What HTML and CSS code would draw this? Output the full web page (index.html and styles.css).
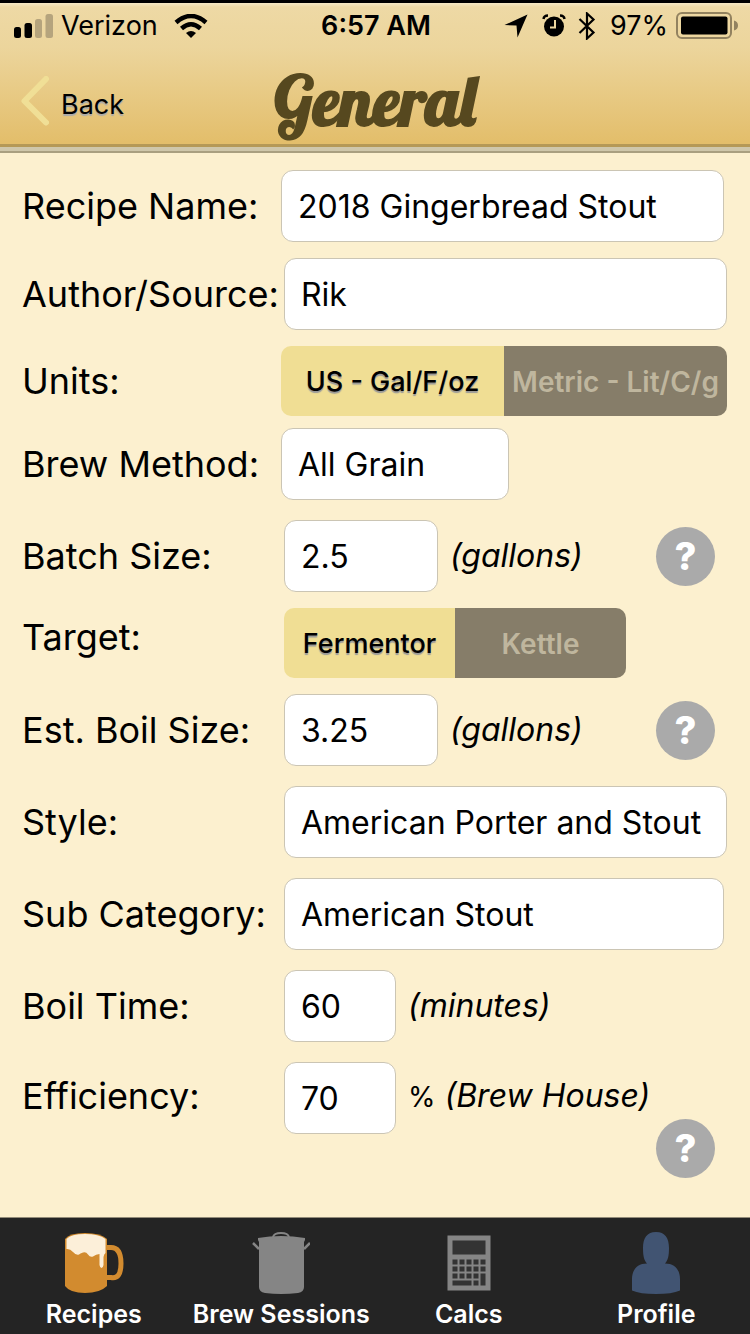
FILE: index.html
```html
<!DOCTYPE html>
<html lang="en">
<head>
<meta charset="utf-8">
<meta name="viewport" content="width=device-width">
<title>General</title>
<link rel="stylesheet" href="styles.css">
</head>
<body>
<header class="header">
  <div class="status">
    <div class="status-left">
      <svg width="39" height="24" viewBox="0 0 39 24"><rect y="13" width="7" height="11" rx="2.5"/><rect x="10.500" y="9" width="7.500" height="15" rx="2.500"/><g fill="#b5a47d"><rect x="21" y="5" width="7" height="19" rx="2.500"/><rect x="31.500" width="7.500" height="24" rx="2.500"/></g></svg>
      <span>Verizon</span>
      <svg class="wifi" width="34" height="24" viewBox="0 0 34 24"><path d="M17 24l-5-5q5-4 10 0z"/><g fill="none" stroke="#000" stroke-width="4.500"><path d="M2 8.500Q17-4.500 32 8.500"/><path d="M7.500 14.500Q17 6 26.500 14.500"/></g></svg>
    </div>
    <time class="status-time">6:57 AM</time>
    <div class="status-right">
      <svg width="24" height="24" viewBox="0 0 24 24"><path d="M23.500 .5L13.500 23.500 12.500 11.500.5 11z"/></svg>
      <svg class="alarm" width="24" height="24" viewBox="0 0 24 24"><circle cx="12" cy="12.500" r="10"/><path d="M1.500 5Q2 1.500 6 1.500M22.500 5Q22 1.500 18 1.500" fill="none" stroke="#000" stroke-width="2.500"/><path d="M13 6v7.500H8" fill="none" stroke="#ecd69f" stroke-width="2"/></svg>
      <svg class="bluetooth" width="18" height="28" viewBox="0 0 18 28"><path d="M1.500 7L15.500 20.500 9 26.500V1.500L15.500 7.500 1.500 21" fill="none" stroke="#000" stroke-width="2.200"/></svg>
      <span>97%</span>
      <svg class="battery" width="62" height="27" viewBox="0 0 62 27"><rect x="1" y="1" width="54" height="25" rx="5" fill="none" stroke="#92825f" stroke-width="2"/><rect x="5" y="4.500" width="46.500" height="18" rx="2"/><path d="M58 8.500q4 1 4 5t-4 5z" fill="#92825f"/></svg>
    </div>
  </div>
  <nav class="nav">
    <button class="back" type="button">
      <svg width="28" height="50" viewBox="0 0 28 50"><path d="M25 3L3.500 25 25 46.500" fill="none" stroke="#f0df96" stroke-width="6" stroke-linecap="round" stroke-linejoin="round"/></svg>
      <span>Back</span>
    </button>
    <h1 class="title">General</h1>
  </nav>
</header>

<main class="form">
  <div class="row row-inset row-near gap-m">
    <label for="name">Recipe Name:</label>
    <input class="field" id="name" value="2018 Gingerbread Stout">
  </div>
  <div class="row gap-m">
    <label for="author">Author/Source:</label>
    <input class="field" id="author" value="Rik">
  </div>
  <div class="row row-near gap-s">
    <span class="label" id="units">Units:</span>
    <div class="segments" role="group" aria-labelledby="units">
      <button class="segment active" type="button" aria-pressed="true">US - Gal/F/oz</button>
      <button class="segment" type="button" aria-pressed="false">Metric - Lit/C/g</button>
    </div>
  </div>
  <div class="row row-near gap-l">
    <label for="method">Brew Method:</label>
    <input class="field field-m" id="method" value="All Grain">
  </div>
  <div class="row gap-m">
    <label for="batch">Batch Size:</label>
    <div class="measure">
      <input class="field field-s" id="batch" value="2.5">
      <span class="unit">(gallons)</span>
      <button class="help" type="button" aria-label="Batch size help">?</button>
    </div>
  </div>
  <div class="row gap-m">
    <span class="label label-raised" id="target">Target:</span>
    <div class="segments segments-short" role="group" aria-labelledby="target">
      <button class="segment active" type="button" aria-pressed="true">Fermentor</button>
      <button class="segment" type="button" aria-pressed="false">Kettle</button>
    </div>
  </div>
  <div class="row gap-l">
    <label for="boil">Est. Boil Size:</label>
    <div class="measure">
      <input class="field field-s" id="boil" value="3.25">
      <span class="unit">(gallons)</span>
      <button class="help" type="button" aria-label="Boil size help">?</button>
    </div>
  </div>
  <div class="row gap-l">
    <label for="style">Style:</label>
    <input class="field" id="style" value="American Porter and Stout">
  </div>
  <div class="row row-inset gap-l">
    <label for="sub">Sub Category:</label>
    <input class="field" id="sub" value="American Stout">
  </div>
  <div class="row gap-l">
    <label for="time">Boil Time:</label>
    <div class="measure">
      <input class="field field-xs" id="time" value="60">
      <span class="unit">(minutes)</span>
    </div>
  </div>
  <div class="row row-top">
    <label for="eff">Efficiency:</label>
    <div class="measure">
      <input class="field field-xs" id="eff" value="70">
      <span class="unit"><span class="percent">%</span> (Brew House)</span>
      <button class="help help-low" type="button" aria-label="Efficiency help">?</button>
    </div>
  </div>
</main>

<nav class="tabs">
  <a class="tab" href="#recipes">
    <svg width="60" height="62" viewBox="0 0 60 62"><path d="M1 7Q5 1 21 1t22 6v47q-7 7-22 7T1 54z" fill="#d28b2f"/><path d="M43 15.500h4q10 0 10 16t-10 14h-4" fill="none" stroke="#d28b2f" stroke-width="5"/><path d="M2.500 7Q7 2 21 2t20.500 5V21Q40 22 39.500 25v8q-.5 3-2 3t-2-3V22Q32 22 29 24.500q-3 1-5-2t-5-2-4 2q-3 1-6-2.500T2.500 17z" fill="#fcefd9"/></svg>
    <span>Recipes</span>
  </a>
  <a class="tab" href="#sessions">
    <svg width="58" height="62" viewBox="0 0 58 62"><path d="M6 6q23-4 47 0v2l-1 2v45q0 5-6 6-17 2-33 0-6-1-6-6V10L6 8z" fill="#858585"/><path d="M21 5q1-4 8-4t8 4" fill="none" stroke="#858585" stroke-width="2"/><path d="M1 11l6 6M58 11l-6 6" fill="none" stroke="#858585" stroke-width="2.500"/></svg>
    <span>Brew Sessions</span>
  </a>
  <a class="tab" href="#calcs">
    <svg width="44" height="62" viewBox="0 0 44 62"><path d="M.5 3.500h43v55H.5z" fill="#858585"/><g fill="#333"><path d="M5.500 8.500h33v14h-33z"/><path d="M5.500 27.500h5v5h-5zm7 0h5v5h-5zm7 0h5v5h-5zm7 0h5v5h-5zm7 0h5v5h-5zM5.500 34.500h5v5h-5zm7 0h5v5h-5zm7 0h5v5h-5zm7 0h5v5h-5zm7 0h5v5h-5zM5.500 41.500h5v5h-5zm7 0h5v5h-5zm7 0h5v5h-5zm7 0h5v5h-5zm7 0h5v12h-5zM5.500 48.500h19v5h-19zm21 0h5v5h-5z"/></g></svg>
    <span>Calcs</span>
  </a>
  <a class="tab" href="#profile">
    <svg width="48" height="62" viewBox="0 0 48 62"><path d="M24 0C33 0 37 6 37 16c0 8-1 12-4 15.500C43 31.500 48 38 48 47v11.500Q40 62 24 62T0 58.500V47c0-9 5-15.500 15-15.500C12 28 11 24 11 16 11 6 15 0 24 0z" fill="#415472"/></svg>
    <span>Profile</span>
  </a>
</nav>
</body>
</html>
```
FILE: styles.css
```css
* { box-sizing: border-box; }

body {
  margin: 0;
  min-height: 100vh;
  display: flex;
  flex-direction: column;
  background: #fcf0cf;
  color: #000;
  font-family: Inter, "Liberation Sans", sans-serif;
}

svg { display: block; flex: none; }

button, input {
  font: inherit;
  color: inherit;
  margin: 0;
}

button {
  border: 0;
  padding: 0;
  background: none;
}

.header {
  border-top: 3px solid #000;
  border-bottom: 2px solid #a99f80;
  background: linear-gradient(#cfc7ab, #cfc7ab) bottom / 100% 4px no-repeat,
    linear-gradient(#b59957, #b59957) 0 calc(100% - 4px) / 100% 3px no-repeat,
    linear-gradient(#f6e8c4 0, #eed9a5 4px, #ecd59c 30%, #e3be6b 94%);
}

.status {
  display: grid;
  grid-template-columns: 1fr auto 1fr;
  align-items: center;
  height: 45px;
  padding: 0 12px 0 14px;
  font-size: 27px;
}

.status-left, .status-right {
  display: flex;
  align-items: center;
  gap: 8px;
}

.status-right { justify-content: flex-end; }
.status-time { font-weight: 600; }
.wifi { margin-left: 8px; }
.alarm { margin-left: 6px; }
.bluetooth { margin: 0 6px 0 4px; }

.nav {
  display: grid;
  grid-template-columns: 1fr auto 1fr;
  align-items: center;
  height: 103px;
  padding: 2px 21px 0;
}

.back {
  display: flex;
  align-items: center;
  gap: 12px;
  font-size: 27px;
  line-height: 32px;
  text-shadow: 0 2px 1px #aaa;
}

.back span { padding-top: 8px; }

.title {
  margin: 0;
  color: #56481f;
  font: bold 68px/72px Lobster, "Liberation Serif", serif;
}

.form {
  flex: 1;
  padding: 17px 0 39px 22px;
}

.row {
  display: grid;
  grid-template-columns: 262px minmax(0, 1fr);
  align-items: center;
  padding-right: 23px;
  font-size: 36px;
  line-height: 44px;
  white-space: nowrap;
}

.row-near { grid-template-columns: 259px minmax(0, 1fr); }
.row-inset { padding-right: 26px; }
.gap-s { margin-bottom: 12px; }
.gap-m { margin-bottom: 16px; }
.gap-l { margin-bottom: 20px; }
.label-raised { padding-bottom: 12px; }

.field {
  width: 100%;
  height: 72px;
  padding: 0 16px;
  border: 1px solid #cbc5b4;
  border-radius: 12px;
  background: #fff;
  font-size: 32px;
}

.field-m { width: 228px; }
.field-s { width: 154px; }
.field-xs { width: 112px; }

.measure {
  display: flex;
  align-items: center;
  gap: 12px;
  padding-right: 12px;
}

.unit {
  font-size: 32px;
  font-style: italic;
}

.percent {
  font-size: 28px;
  font-style: normal;
}

.help {
  flex: none;
  width: 59px;
  height: 59px;
  margin-left: auto;
  border-radius: 50%;
  background: #aaa;
  color: #fff;
  font-size: 38px;
  font-weight: 800;
  line-height: 59px;
}

.row-top, .row-top .measure { align-items: flex-start; }
.row-top .measure { gap: 0; }
.row-top label, .row-top .unit { padding-top: 12px; }
.row-top .unit { padding-left: 12px; }
.help-low { margin-top: 57px; }

.segments {
  display: grid;
  grid-template-columns: 1fr 1fr;
  height: 70px;
  border-radius: 10px;
  overflow: hidden;
}

.segments-short { width: 342px; }

.segment {
  padding-top: 2px;
  background: #867d69;
  color: #bfb69e;
  font-size: 28px;
  font-weight: 600;
}

.segment.active {
  background: #f0de94;
  color: #000;
  font-size: 27px;
  font-weight: 500;
  text-shadow: 0 2px 1px #999;
}

.tabs {
  display: grid;
  grid-template-columns: repeat(4, 1fr);
  padding: 14px 0 4px;
  border-top: 1px solid #938c79;
  border-bottom: 1px solid #000;
  background: #242424;
}

.tab {
  display: flex;
  flex-direction: column;
  align-items: center;
  gap: 4px;
  color: #fff;
  font-size: 25px;
  font-weight: 600;
  line-height: 32px;
  text-decoration: none;
  white-space: nowrap;
}
```
